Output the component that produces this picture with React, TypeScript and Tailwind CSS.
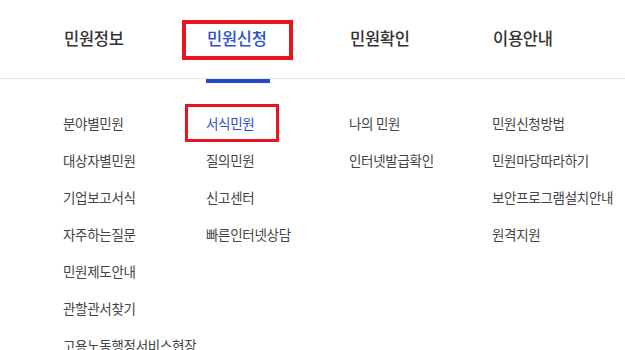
import React from "react";

const font = { fontFamily: '"Noto Sans CJK KR", "Noto Sans", sans-serif' };

const nav = ["민원정보", "민원신청", "민원확인", "이용안내"];
const cols: string[][] = [
  ["분야별민원", "대상자별민원", "기업보고서식", "자주하는질문", "민원제도안내", "관할관서찾기", "고용노동행정서비스현장"],
  ["서식민원", "질의민원", "신고센터", "빠른인터넷상담"],
  ["나의 민원", "인터넷발급확인"],
  ["민원신청방법", "민원마당따라하기", "보안프로그램설치안내", "원격지원"],
];

export default function App() {
  return (
    <div className="w-[625px] h-[350px] overflow-hidden bg-white relative" style={font}>
      <div className="h-[79px] border-b border-[#e6e6e6] flex pl-[64px]">
        {nav.map((n, i) => (
          <div key={n} className="relative w-[143px] shrink-0 h-full flex items-center pb-[2px]">
            <span
              className={
                "text-[16.5px] font-medium tracking-[-0.3px] " +
                (i === 1 ? "text-[#2c50cf]" : "text-[#333333]")
              }
            >
              {n}
            </span>
            {i === 1 && (
              <>
                <span className="absolute left-[-25px] w-[111px] top-[20px] h-[40px] border-[4px] border-[#e8141d]" />
                <span className="absolute left-[-1px] w-[64px] top-[79px] h-[4px] bg-[#2449c9] z-10" />
              </>
            )}
          </div>
        ))}
      </div>
      <div className="flex h-[271px]">
        <div className="w-[3px] bg-[#e9edf2] flex flex-col">
          <div className="mt-[184px] h-[53px] bg-[#62d0cf]" />
        </div>
        <div className="flex pl-[63px] pt-[26px]">
          {cols.map((c, ci) => (
            <div key={ci} className="w-[143px] shrink-0 flex flex-col">
              {c.map((t) => (
                <div key={t} className="relative h-[37px] leading-[37px] text-[13.5px] tracking-[-0.3px] whitespace-nowrap">
                  {ci === 1 && t === "서식민원" ? (
                    <>
                      <span className="text-[#2c50cf]">{t}</span>
                      <span className="absolute left-[-21px] w-[94px] top-[-1px] h-[38px] border-[3px] border-[#e8141d]" />
                    </>
                  ) : (
                    <span className="text-[#444444]">{t}</span>
                  )}
                </div>
              ))}
            </div>
          ))}
        </div>
      </div>
    </div>
  );
}
